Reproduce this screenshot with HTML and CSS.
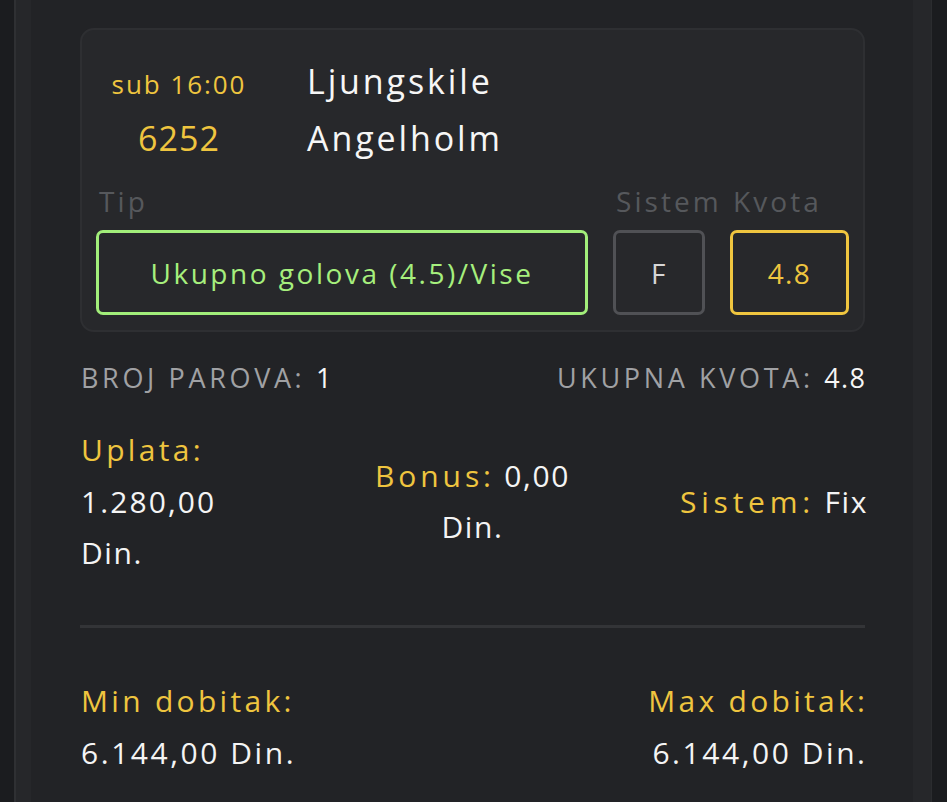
FILE: index.html
```html
<!DOCTYPE html>
<html lang="sr">
<head>
<meta charset="utf-8">
<title>Tiket</title>
<link rel="stylesheet" href="styles.css">
</head>
<body>
<div class="frame">
  <main class="content">
    <section class="card">
      <div class="match">
        <div class="time">sub 16:00</div>
        <div class="team">Ljungskile</div>
        <div class="code">6252</div>
        <div class="team">Angelholm</div>
      </div>
      <div class="picks">
        <div class="label">Tip</div>
        <div class="label">Sistem</div>
        <div class="label">Kvota</div>
        <div class="box box-tip">Ukupno golova (4.5)/Vise</div>
        <div class="box box-sys">F</div>
        <div class="box box-odd">4.8</div>
      </div>
    </section>

    <div class="stats">
      <div><span class="muted">BROJ PAROVA:</span> <span class="val">1</span></div>
      <div class="end"><span class="muted">UKUPNA KVOTA:</span> <span class="val">4.8</span></div>
    </div>

    <div class="sums">
      <div class="col col-left">
        <span class="line gold lbl">Uplata:</span>
        <span class="line num">1.280,00</span>
        <span class="line">Din.</span>
      </div>
      <div class="col col-mid">
        <span class="line"><span class="gold lbl-b">Bonus:</span> 0,00</span>
        <span class="line">Din.</span>
      </div>
      <div class="col col-right">
        <span class="line end"><span class="gold lbl-w">Sistem:</span> Fix</span>
      </div>
    </div>

    <hr class="divider">

    <div class="wins">
      <div class="col">
        <span class="line gold lbl">Min dobitak:</span>
        <span class="line num2">6.144,00 Din.</span>
      </div>
      <div class="col col-right">
        <span class="line gold lbl end-l">Max dobitak:</span>
        <span class="line num2 end-n">6.144,00 Din.</span>
      </div>
    </div>
  </main>
</div>
</body>
</html>
```

FILE: styles.css
```css
* { box-sizing: border-box; }

html, body {
  margin: 0;
  padding: 0;
  background: #1b1c1f;
  height: 802px;
  overflow: hidden;
}

body {
  font-family: "Open Sans", "Noto Sans", sans-serif;
  color: #f4f4f4;
  letter-spacing: 0.1em;
}

.frame {
  margin-left: 14px;
  width: 918px;
  min-height: 802px;
  background: #26272a;
  border-left: 2px solid #2f3033;
  border-right: 1px solid #2b2c2f;
  padding-left: 15px;
  padding-right: 18px;
}

.content {
  background: #222326;
  min-height: 802px;
  padding: 28px 48px 0 49px;
}

.card {
  background: #27282b;
  border: 2px solid #2e2f32;
  border-radius: 14px;
  padding: 24px 13px 15px 14px;
}

.match {
  display: grid;
  grid-template-columns: 166px 1fr;
  column-gap: 45px;
  align-items: baseline;
  line-height: 54px;
}

.time {
  color: #efc53f;
  font-size: 26px;
  text-align: center;
  letter-spacing: 0.075em;
}

.code {
  color: #efc53f;
  font-size: 34px;
  text-align: center;
  letter-spacing: 0.03em;
}

.team {
  font-size: 34px;
  color: #f6f6f6;
  letter-spacing: 0.085em;
}

.picks {
  display: grid;
  grid-template-columns: 492px 92px 119px;
  column-gap: 25px;
  row-gap: 11px;
  margin-top: 18px;
}

.label {
  color: #56585c;
  font-size: 28px;
  line-height: 36px;
  padding-left: 3px;
  white-space: nowrap;
  letter-spacing: 0.11em;
}

.box {
  height: 85px;
  border: 3px solid #505155;
  border-radius: 7px;
  display: flex;
  align-items: center;
  justify-content: center;
  font-size: 28px;
  white-space: nowrap;
  letter-spacing: 0.05em;
}

.box-tip {
  border-color: #a2ee7a;
  color: #a6ef7d;
  letter-spacing: 0.09em;
}

.box-sys {
  color: #d6d6d6;
}

.box-odd {
  border-color: #efc53f;
  color: #efc53f;
}

.stats {
  display: flex;
  justify-content: space-between;
  margin-top: 28px;
  font-size: 27px;
  line-height: 36px;
  padding-left: 1px;
  letter-spacing: 0.135em;
}

.muted { color: #a0a1a4; }
.val { color: #f6f6f6; letter-spacing: 0.05em; }

.stats .end { margin-right: -0.05em; }

.sums {
  display: grid;
  grid-template-columns: 1fr 1fr 1fr;
  align-items: center;
  margin-top: 28px;
  font-size: 30px;
  line-height: 51.5px;
}

.col {
  display: flex;
  flex-direction: column;
}

.col-left { padding-left: 1px; }
.col-mid { align-items: center; text-align: center; }
.col-right { align-items: flex-end; text-align: right; }

.line { display: block; white-space: nowrap; }
.num { letter-spacing: 0.07em; }
.num2 { letter-spacing: 0.085em; }
.lbl { letter-spacing: 0.11em; }
.lbl-b { letter-spacing: 0.13em; }
.lbl-w { letter-spacing: 0.16em; }
.end { margin-right: -0.1em; }
.end-l { margin-right: -0.11em; }
.end-n { margin-right: -0.085em; }

.gold { color: #efc53f; }

.divider {
  border: 0;
  height: 3px;
  background: #333437;
  margin: 46px 0 0 0;
}

.wins {
  display: flex;
  justify-content: space-between;
  margin-top: 47px;
  font-size: 30px;
  line-height: 52px;
  padding-left: 1px;
}
```
